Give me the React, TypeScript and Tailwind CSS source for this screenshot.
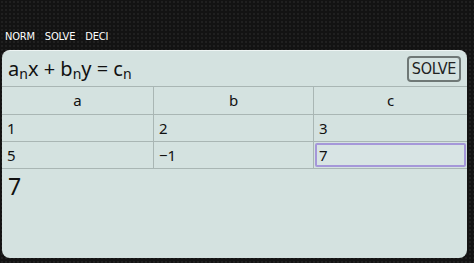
import { useState } from "react";

const rows = [
  ["1", "2", "3"],
  ["5", "\u22121", "7"],
];

export default function App() {
  const [active] = useState<[number, number]>([1, 2]);

  return (
    <div className="h-[263px] w-[474px] overflow-hidden bg-[#131313] bg-[radial-gradient(#202020_1px,transparent_1px)] bg-[length:4px_4px] font-['Noto_Sans',sans-serif] text-[#111]">
      <div className="flex h-[50px] items-end gap-[10px] px-[5px] pb-[8px] font-['DejaVu_Sans_Condensed','Noto_Sans',sans-serif] text-[11px] leading-none tracking-[-0.2px] text-white">
        <span>NORM</span>
        <span>SOLVE</span>
        <span>DECI</span>
      </div>

      <div className="ml-[2px] flex h-[208px] w-[465px] flex-col overflow-hidden rounded-[8px] border-t border-[#eef5f4] bg-[#d4e2e0]">
        <div className="flex h-[35px] items-center justify-between pl-[6px] pr-[6px]">
          <div className="text-[20px] leading-none">
            a<sub className="text-[14px]">n</sub>x + b<sub className="text-[14px]">n</sub>y = c
            <sub className="text-[14px]">n</sub>
          </div>
          <button
            type="button"
            className="h-[26px] rounded-[4px] border-2 border-[#6f7876] px-[3px] font-['DejaVu_Sans_Condensed','Noto_Sans',sans-serif] text-[16px] leading-none tracking-[-0.3px] text-[#222]"
          >
            SOLVE
          </button>
        </div>

        <div className="grid grid-cols-[152px_160px_1fr] border-t border-[#a9b6b4] text-[15px]">
          {["a", "b", "c"].map((h, i) => (
            <div
              key={h}
              className={`flex h-[28px] items-center justify-center border-b border-[#a9b6b4] ${
                i < 2 ? "border-r" : ""
              }`}
            >
              {h}
            </div>
          ))}
          {rows.map((row, r) =>
            row.map((v, c) => (
              <div
                key={`${r}-${c}`}
                className={`flex h-[27px] items-center border-b border-[#a9b6b4] ${
                  c < 2 ? "border-r" : ""
                } ${active[0] === r && active[1] === c ? "p-[1px]" : ""}`}
              >
                {active[0] === r && active[1] === c ? (
                  <div className="flex h-full w-full items-center rounded-[2px] border-2 border-[#a597d9] bg-[#d8e4e4] pl-[2px]">
                    {v}
                  </div>
                ) : (
                  <span className="pl-[5px]">{v}</span>
                )}
              </div>
            )),
          )}
        </div>

        <div className="px-[6px] pt-[6px] text-[23px] leading-none">7</div>
      </div>
    </div>
  );
}
